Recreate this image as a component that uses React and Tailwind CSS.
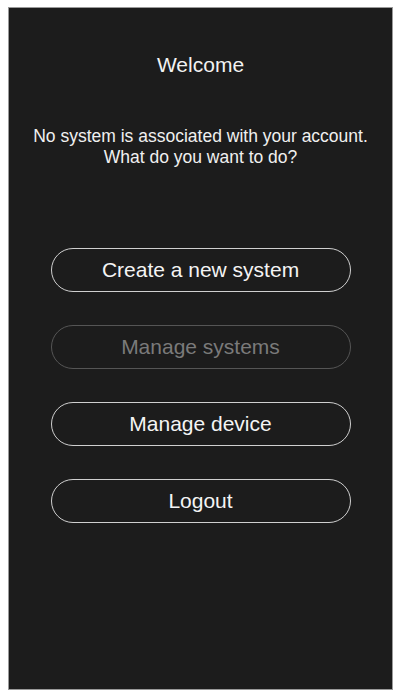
import React from 'react';

const buttons = [
  { label: 'Create a new system', disabled: false },
  { label: 'Manage systems', disabled: true },
  { label: 'Manage device', disabled: false },
  { label: 'Logout', disabled: false },
];

export default function App() {
  return (
    <div className="w-[395px] h-[696px] bg-white pt-[7px] pl-[8px]" style={{ fontFamily: '"Liberation Sans", Arial, sans-serif' }}>
      <div className="w-[385px] h-[683px] bg-[#1c1c1c] border border-[#9a9a9a] flex flex-col items-center">
        {/* Header */}
        <h1 className="mt-[44px] text-[21px] leading-[26px] text-[#f2f2f2]">Welcome</h1>
        <p className="mt-[48px] text-[17.5px] leading-[21px] text-center text-[#f0f0f0] whitespace-nowrap">
          No system is associated with your account.
          <br />
          What do you want to do?
        </p>

        {/* Actions */}
        <div className="mt-[80px] flex flex-col gap-[33px]">
          {buttons.map(b => (
            <button
              key={b.label}
              disabled={b.disabled}
              className={
                b.disabled
                  ? 'w-[300px] h-[44px] rounded-full border-[1.5px] border-[#555555] text-[21px] text-[#7a7a7a]'
                  : 'w-[300px] h-[44px] rounded-full border-[1.5px] border-[#cfcfcf] text-[21px] text-[#f4f4f4]'
              }
            >
              {b.label}
            </button>
          ))}
        </div>
      </div>
    </div>
  );
}
